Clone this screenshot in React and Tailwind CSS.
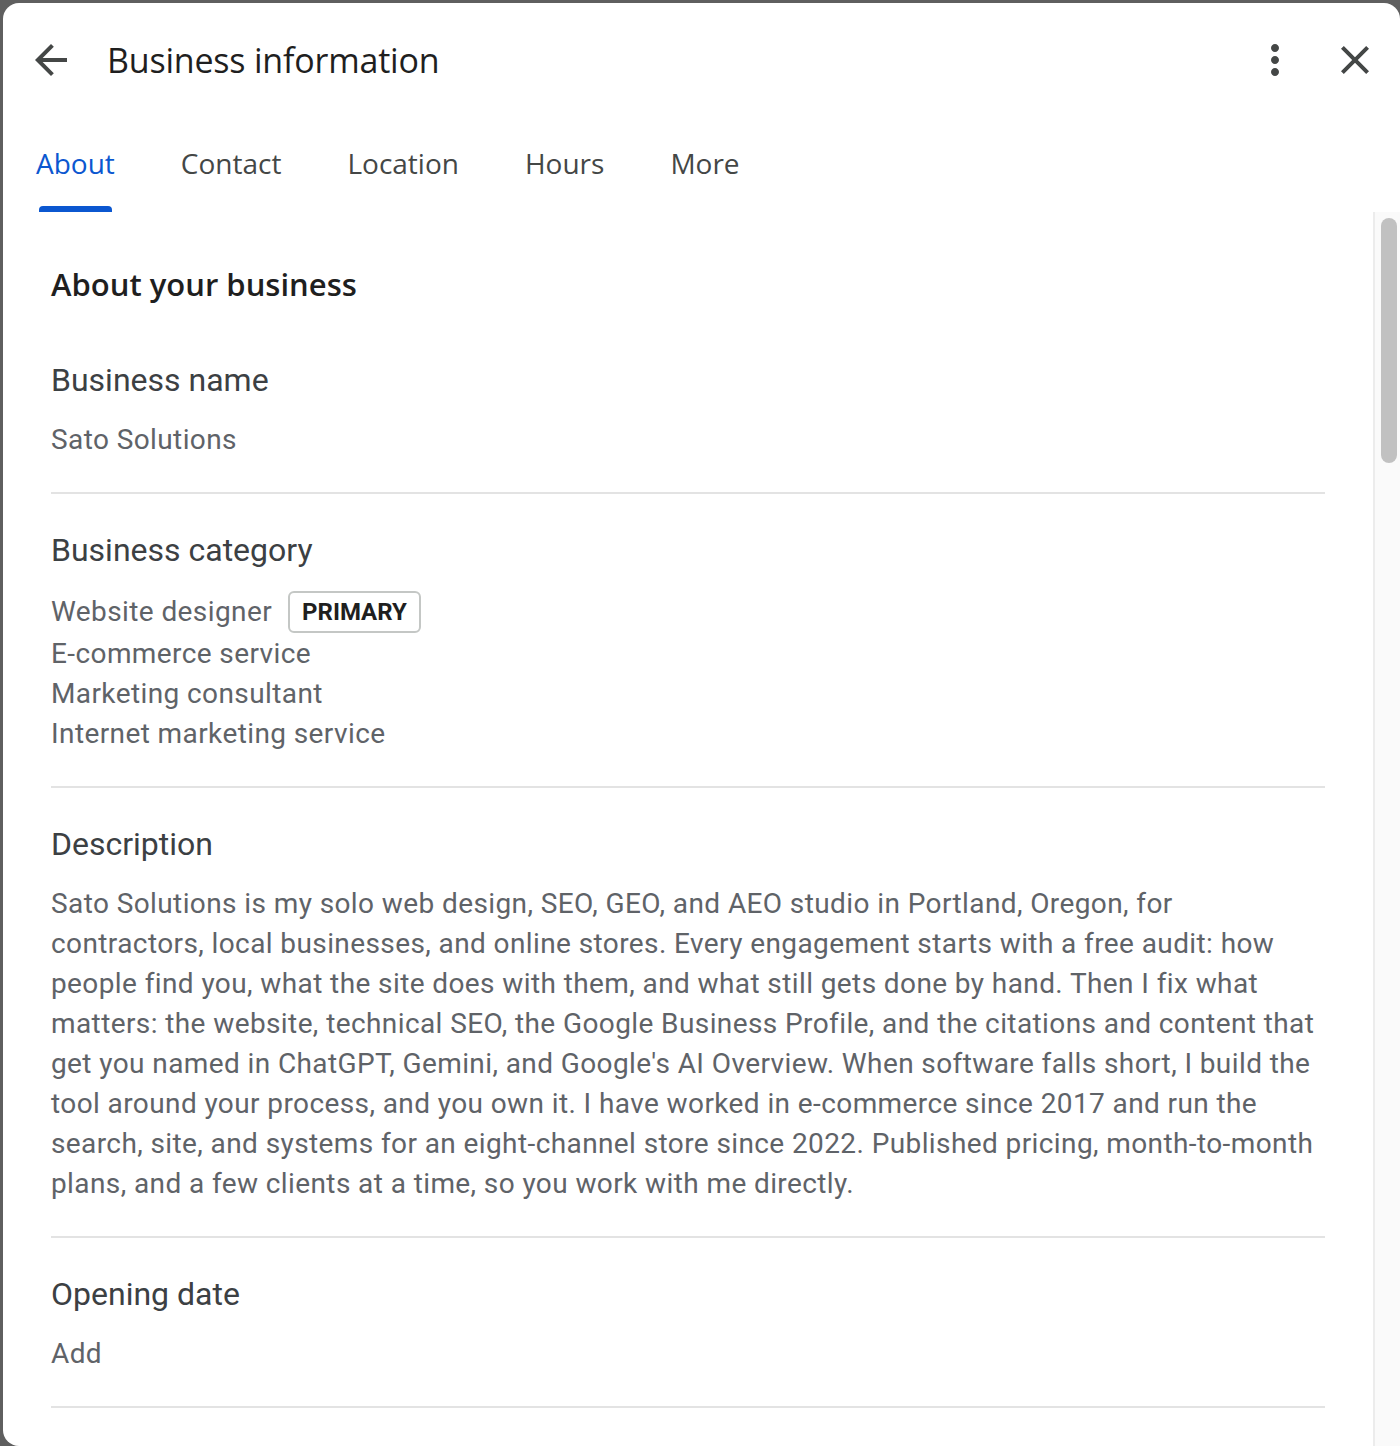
import React from 'react';

const sans = { fontFamily: '"Open Sans", "Noto Sans", sans-serif' };

const tabs = ['About', 'Contact', 'Location', 'Hours', 'More'];

const categories = ['E-commerce service', 'Marketing consultant', 'Internet marketing service'];

const description =
    "Sato Solutions is my solo web design, SEO, GEO, and AEO studio in Portland, Oregon, for contractors, local businesses, and online stores. Every engagement starts with a free audit: how people find you, what the site does with them, and what still gets done by hand. Then I fix what matters: the website, technical SEO, the Google Business Profile, and the citations and content that get you named in ChatGPT, Gemini, and Google's AI Overview. When software falls short, I build the tool around your process, and you own it. I have worked in e-commerce since 2017 and run the search, site, and systems for an eight-channel store since 2022. Published pricing, month-to-month plans, and a few clients at a time, so you work with me directly.";

const Section = ({ title, children }) => (
    <div className="pt-[32px] pb-[32px] border-b-2 border-[#e3e3e3]">
        <h3 className="text-[32px] leading-[48px] text-[#3c4043]">{title}</h3>
        <div className="mt-[16px] text-[28px] leading-[40px] tracking-[0.4px] text-[#5f6368]">{children}</div>
    </div>
);

const App = () => {
    return (
        <div className="w-[1400px] h-[1446px] bg-[#5f5f5f] pt-[3px] pl-[3px] overflow-hidden" style={{ fontFamily: 'Roboto, "Liberation Sans", sans-serif' }}>
            <div className="w-[1397px] h-[1443px] bg-white rounded-tl-[16px] rounded-tr-[16px] rounded-bl-[16px] flex flex-col overflow-hidden">
                {/* header */}
                <div className="h-[114px] shrink-0 flex items-center pl-[24px] pr-[21px]">
                    <svg viewBox="0 0 24 24" className="w-[48px] h-[48px] fill-[#444746]">
                        <path d="M20 11H7.83l5.59-5.59L12 4l-8 8 8 8 1.41-1.41L7.83 13H20v-2z" />
                    </svg>
                    <h1 className="ml-[32px] text-[34px] text-[#1f1f1f] tracking-[-0.2px]" style={sans}>Business information</h1>
                    <div className="ml-auto flex items-center gap-[32px]">
                        <svg viewBox="0 0 24 24" className="w-[48px] h-[48px] fill-[#444746]">
                            <path d="M12 8c1.1 0 2-.9 2-2s-.9-2-2-2-2 .9-2 2 .9 2 2 2zm0 2c-1.1 0-2 .9-2 2s.9 2 2 2 2-.9 2-2-.9-2-2-2zm0 6c-1.1 0-2 .9-2 2s.9 2 2 2 2-.9 2-2-.9-2-2-2z" />
                        </svg>
                        <svg viewBox="0 0 24 24" className="w-[48px] h-[48px] fill-[#444746]">
                            <path d="M19 6.41L17.59 5 12 10.59 6.41 5 5 6.41 10.59 12 5 17.59 6.41 19 12 13.41 17.59 19 19 17.59 13.41 12z" />
                        </svg>
                    </div>
                </div>

                {/* tabs */}
                <div className="h-[95px] shrink-0 flex pl-[33px] gap-[66px]" style={sans}>
                    {tabs.map((t, i) => (
                        <div key={t} className="flex flex-col justify-end">
                            <span className={`text-[28px] leading-[40px] ${i === 0 ? 'text-[#0b57d0]' : 'text-[#444746]'}`}>{t}</span>
                            <div className={`mt-[23px] h-[6px] mx-[3px] rounded-t-[4px] ${i === 0 ? 'bg-[#0b57d0]' : 'bg-transparent'}`} />
                        </div>
                    ))}
                </div>

                {/* scroll body */}
                <div className="flex-1 flex min-h-0">
                    <div className="flex-1 pl-[48px] pr-[48px] pt-[52px]">
                        <h2 className="text-[31px] leading-[40px] font-semibold text-[#1f1f1f]" style={sans}>About your business</h2>

                        <div className="mt-[52px] pb-[32px] border-b-2 border-[#e3e3e3]">
                            <h3 className="text-[32px] leading-[48px] text-[#3c4043]">Business name</h3>
                            <div className="mt-[16px] text-[28px] leading-[40px] tracking-[0.4px] text-[#5f6368]">Sato Solutions</div>
                        </div>

                        <Section title="Business category">
                            <div className="flex items-center h-[44px]">
                                <span>Website designer</span>
                                <span className="ml-[16px] h-[42px] px-[12px] flex items-center border-2 border-[#c4c7c5] rounded-[6px] text-[24px] font-bold tracking-normal text-[#1f1f1f]">PRIMARY</span>
                            </div>
                            {categories.map((c) => (
                                <div key={c}>{c}</div>
                            ))}
                        </Section>

                        <Section title="Description">
                            <p>{description}</p>
                        </Section>

                        <Section title="Opening date">
                            <div>Add</div>
                        </Section>
                    </div>

                    {/* scrollbar */}
                    <div className="w-[27px] shrink-0 bg-[#fafafa] border-l-2 border-[#ececec] pt-[6px] pl-[6px]">
                        <div className="w-[16px] h-[245px] rounded-full bg-[#c1c1c1]" />
                    </div>
                </div>
            </div>
        </div>
    );
};

export default App;
